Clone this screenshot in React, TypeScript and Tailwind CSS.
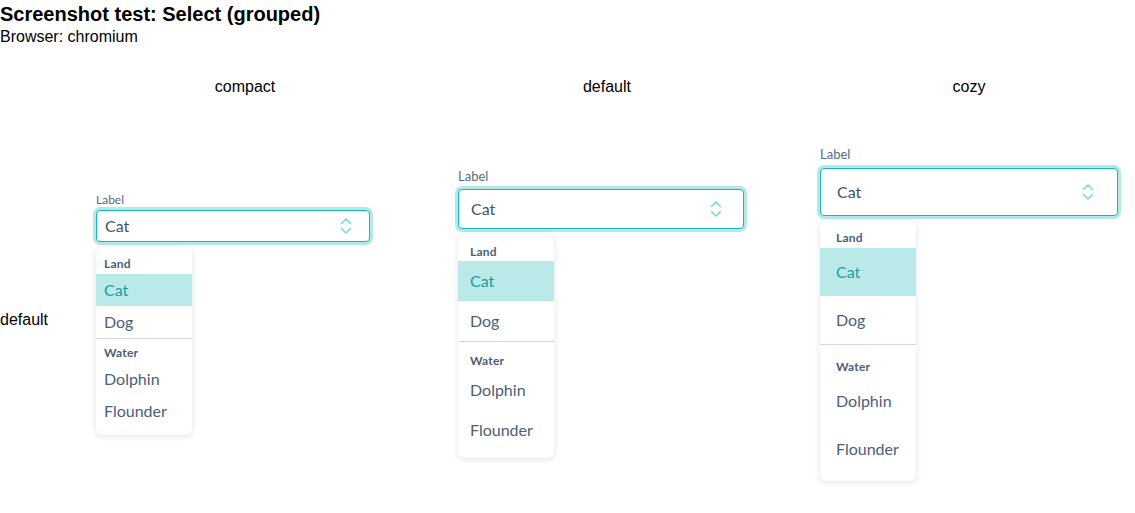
import React from 'react';

type Density = 'compact' | 'default' | 'cozy';

const sizes = {
  compact: {
    width: 'w-[274px]',
    label: 'text-[12px] leading-[16px] mb-[2px]',
    box: 'h-[32px] pl-2 pr-4',
    gap: 'mt-[5px]',
    item: 'h-[32px] px-2',
    pad: 'px-2',
    groupGap: 'mt-[5px]',
  },
  default: {
    width: 'w-[286px]',
    label: 'text-[13px] leading-[16px] mb-[5px]',
    box: 'h-[40px] pl-3 pr-5',
    gap: 'mt-[5px]',
    item: 'h-[40px] px-3',
    pad: 'px-3',
    groupGap: 'mt-[9px]',
  },
  cozy: {
    width: 'w-[298px]',
    label: 'text-[13px] leading-[16px] mb-[6px]',
    box: 'h-[48px] pl-4 pr-[22px]',
    gap: 'mt-[5px]',
    item: 'h-[48px] px-4',
    pad: 'px-4',
    groupGap: 'mt-[13px]',
  },
};

function Chevrons() {
  return (
    <svg width="14" height="20" viewBox="0 0 14 20" fill="none" stroke="#78dadc" strokeWidth="1.6" strokeLinecap="round" strokeLinejoin="round">
      <path d="M2.5 7.5 L7 3 L11.5 7.5" />
      <path d="M2.5 12.5 L7 17 L11.5 12.5" />
    </svg>
  );
}

function GroupedSelect({ density }: { density: Density }) {
  const s = sizes[density];
  return (
    <div className="flex flex-col font-['Lato',sans-serif]">
      <label className={`${s.label} text-[#5b6c80]`}>Label</label>
      <div
        className={`${s.width} ${s.box} flex items-center justify-between rounded-[4px] border border-[#16b6b9] bg-white shadow-[0_0_0_3px_#b5e8e9]`}
      >
        <span className="text-[16px] text-[#3f526a]">Cat</span>
        <Chevrons />
      </div>
      <div className={`${s.gap} w-[96px] rounded-[6px] bg-white pt-2 pb-2 shadow-[0_1px_6px_rgba(30,50,80,0.14)]`}>
        <div className={`flex h-[19px] items-center ${s.pad} text-[12px] font-bold tracking-[0.2px] text-[#4b5e76]`}>Land</div>
        <div className={`flex items-center ${s.item} bg-[#bae9ea] text-[16px] text-[#199ea2]`}>Cat</div>
        <div className={`flex items-center ${s.item} text-[16px] text-[#4b5e76]`}>Dog</div>
        <div className="h-px bg-[#cfd8e0]" />
        <div className={`${s.groupGap} flex h-[19px] items-center ${s.pad} text-[12px] font-bold tracking-[0.2px] text-[#4b5e76]`}>Water</div>
        <div className={`flex items-center ${s.item} text-[16px] text-[#4b5e76]`}>Dolphin</div>
        <div className={`flex items-center ${s.item} text-[16px] text-[#4b5e76]`}>Flounder</div>
      </div>
    </div>
  );
}

export default function App() {
  return (
    <div className="h-[513px] w-[1135px] overflow-hidden bg-white font-['Liberation_Sans',Arial,sans-serif] text-black">
      <h1 className="text-[20px] font-bold leading-[28px]">Screenshot test: Select (grouped)</h1>
      <div className="text-[16px] leading-[18px]">Browser: chromium</div>
      <div className="grid grid-cols-[64px_362px_362px_362px]">
        <div />
        <div className="py-8 text-center text-[16px] leading-[18px]">compact</div>
        <div className="py-8 text-center text-[16px] leading-[18px]">default</div>
        <div className="py-8 text-center text-[16px] leading-[18px]">cozy</div>

        <div className="flex h-[370px] items-center pt-[14px] text-[16px] leading-[18px]">default</div>
        <div className="flex h-[370px] items-center px-8">
          <GroupedSelect density="compact" />
        </div>
        <div className="flex h-[370px] items-center px-8">
          <GroupedSelect density="default" />
        </div>
        <div className="flex h-[370px] items-center px-8">
          <GroupedSelect density="cozy" />
        </div>
      </div>
    </div>
  );
}
